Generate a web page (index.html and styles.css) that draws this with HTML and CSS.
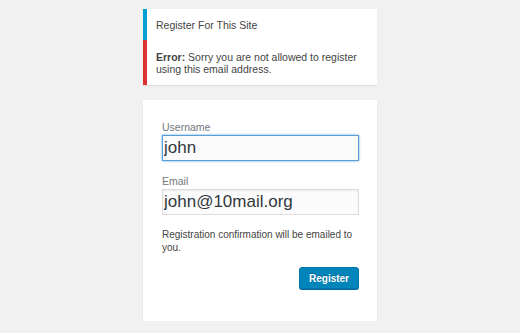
FILE: index.html
```html
<!DOCTYPE html>
<html lang="en">
<head>
  <meta charset="UTF-8" />
  <title>Registration Form</title>
  <link rel="stylesheet" href="styles.css">
</head>
<body>
  <div class="login">
    <div class="notices">
      <div class="notice message">Register For This Site</div>
      <div class="notice error"><strong>Error:</strong> Sorry you are not allowed to register using this email address.</div>
    </div>
    <form class="register-form">
      <label for="user_login">Username</label>
      <input type="text" id="user_login" class="focused" value="john" />
      <label for="user_email">Email</label>
      <input type="text" id="user_email" value="john@10mail.org" />
      <p class="reg-note">Registration confirmation will be emailed to you.</p>
      <div class="submit-row">
        <button type="button">Register</button>
      </div>
    </form>
  </div>
</body>
</html>
```

FILE: styles.css
```css
  body {
    font-family: "Liberation Sans", Arial, sans-serif;
    background: #f1f1f1;
    margin: 0;
    color: #444;
  }
  .login {
    width: 234px;
    margin: 0 auto;
    padding-top: 9px;
  }
  .notices {
    background: #fff;
    box-shadow: 0 1px 1px rgba(0,0,0,0.08);
    margin-bottom: 15px;
  }
  .notice {
    border-left: 4px solid #00a0d2;
    padding: 0 10px 0 9px;
    font-size: 10.5px;
    line-height: 12px;
  }
  .message {
    padding-top: 10px;
    padding-bottom: 9px;
  }
  .error {
    border-left-color: #dc3232;
    padding-top: 11px;
    padding-bottom: 10px;
  }
  .error strong { font-weight: bold; }
  .register-form {
    background: #fff;
    box-shadow: 0 1px 2px rgba(0,0,0,0.1);
    padding: 20px 18px 32px 19px;
  }
  label {
    display: block;
    font-size: 10.5px;
    line-height: 14px;
    color: #72777c;
    margin-bottom: 1px;
  }
  input {
    display: block;
    width: 100%;
    box-sizing: border-box;
    height: 26px;
    margin: 0 0 13px;
    padding: 0 1px;
    font-family: "Liberation Sans", Arial, sans-serif;
    font-size: 17px;
    color: #32373c;
    background: #fbfbfb;
    border: 1px solid #ddd;
    box-shadow: inset 0 1px 2px rgba(0,0,0,0.07);
    outline: none;
  }
  input.focused {
    border-color: #5b9dd9;
    box-shadow: 0 0 2px rgba(30,140,190,0.8);
  }
  .reg-note {
    margin: 0 0 13px;
    font-size: 10px;
    line-height: 13px;
  }
  .submit-row {
    display: flex;
    justify-content: flex-end;
  }
  button {
    height: 22px;
    padding: 0 9px;
    font-family: "Liberation Sans", Arial, sans-serif;
    font-size: 10px;
    font-weight: bold;
    color: #fff;
    background: #0085ba;
    border: 1px solid #0073aa;
    border-radius: 3px;
    box-shadow: 0 1px 0 #006799;
    text-shadow: 0 -1px 1px #006799;
    cursor: pointer;
  }
```
